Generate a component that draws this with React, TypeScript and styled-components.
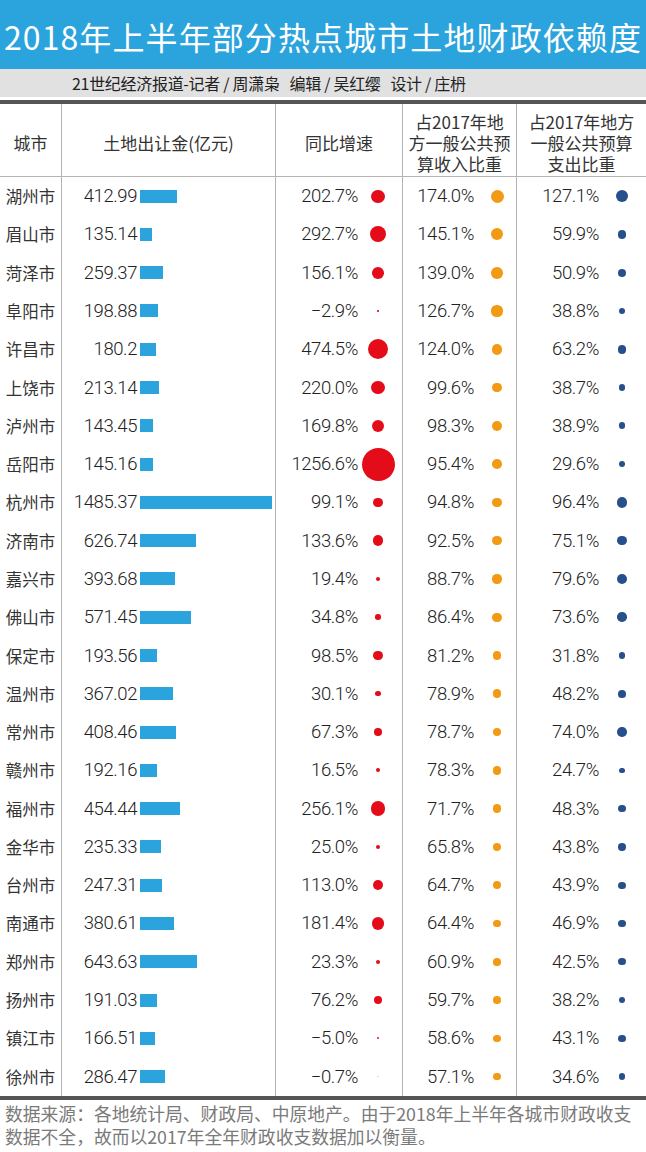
import styled, { createGlobalStyle } from 'styled-components'

export const GlobalStyle = createGlobalStyle`
  html, body {
    margin: 0;
    padding: 0;
    background: #ffffff;
  }
  body {
    font-family: 'Roboto', 'Noto Sans CJK SC', sans-serif;
    color: #222222;
  }
`

type Row = [string, number, number, number, number]

const rows: Row[] = [
  ['湖州市', 412.99, 202.7, 174.0, 127.1],
  ['眉山市', 135.14, 292.7, 145.1, 59.9],
  ['菏泽市', 259.37, 156.1, 139.0, 50.9],
  ['阜阳市', 198.88, -2.9, 126.7, 38.8],
  ['许昌市', 180.2, 474.5, 124.0, 63.2],
  ['上饶市', 213.14, 220.0, 99.6, 38.7],
  ['泸州市', 143.45, 169.8, 98.3, 38.9],
  ['岳阳市', 145.16, 1256.6, 95.4, 29.6],
  ['杭州市', 1485.37, 99.1, 94.8, 96.4],
  ['济南市', 626.74, 133.6, 92.5, 75.1],
  ['嘉兴市', 393.68, 19.4, 88.7, 79.6],
  ['佛山市', 571.45, 34.8, 86.4, 73.6],
  ['保定市', 193.56, 98.5, 81.2, 31.8],
  ['温州市', 367.02, 30.1, 78.9, 48.2],
  ['常州市', 408.46, 67.3, 78.7, 74.0],
  ['赣州市', 192.16, 16.5, 78.3, 24.7],
  ['福州市', 454.44, 256.1, 71.7, 48.3],
  ['金华市', 235.33, 25.0, 65.8, 43.8],
  ['台州市', 247.31, 113.0, 64.7, 43.9],
  ['南通市', 380.61, 181.4, 64.4, 46.9],
  ['郑州市', 643.63, 23.3, 60.9, 42.5],
  ['扬州市', 191.03, 76.2, 59.7, 38.2],
  ['镇江市', 166.51, -5.0, 58.6, 43.1],
  ['徐州市', 286.47, -0.7, 57.1, 34.6],
]

const BLUE = '#2ba3dd'

const Page = styled.div`
  width: 646px;
  display: flex;
  flex-direction: column;
`

const TitleBar = styled.div`
  height: 69px;
  background: ${BLUE};
  display: flex;
  align-items: center;
  justify-content: center;
  color: #ffffff;
  font-family: 'Noto Sans CJK SC', sans-serif;
  font-size: 32px;
  letter-spacing: 1.1px;
  padding-top: 2px;
  box-sizing: border-box;
`

const Byline = styled.div`
  height: 28px;
  background: #e1e1e1;
  display: flex;
  align-items: center;
  justify-content: flex-start;
  padding-left: 72px;
  font-family: 'Noto Sans CJK SC', sans-serif;
  font-size: 16px;
  letter-spacing: -0.3px;
  color: #222;
  white-space: pre;
`

const Table = styled.div`
  margin-top: 3px;
  border-top: 4px solid #555555;
  border-bottom: 4px solid #555555;
  display: grid;
  grid-template-columns: 62px 214px 127px 114px 129px;
`

const HeadCell = styled.div<{ $last?: boolean }>`
  height: 73px;
  border-bottom: 1px solid #b4b4b4;
  border-right: ${(p) => (p.$last ? 'none' : '1px solid #b4b4b4')};
  display: flex;
  align-items: center;
  justify-content: center;
  text-align: center;
  font-family: 'Noto Sans CJK SC', sans-serif;
  font-size: 17px;
  line-height: 21px;
  color: #333;
  box-sizing: border-box;
  padding-top: 4px;
`

const Cell = styled.div<{ $last?: boolean; $first?: boolean }>`
  height: 38.29px;
  border-right: ${(p) => (p.$last ? 'none' : '1px solid #b4b4b4')};
  display: flex;
  align-items: center;
  justify-content: ${(p) => (p.$first ? 'center' : 'flex-start')};
  box-sizing: border-box;
`

const CityName = styled.span`
  font-family: 'Noto Sans CJK SC', sans-serif;
  font-size: 16.5px;
  color: #333;
`

const Num = styled.span<{ $w: number }>`
  width: ${(p) => p.$w}px;
  text-align: right;
  flex: none;
  font-family: 'Roboto', 'Liberation Sans', sans-serif;
  font-weight: 300;
  font-size: 18.5px;
  color: #222;
  letter-spacing: -0.4px;
`

const Bar = styled.div`
  height: 13px;
  background: ${BLUE};
  margin-left: 3px;
`

const DotBox = styled.div`
  width: 36px;
  height: 36px;
  flex: none;
  display: flex;
  align-items: center;
  justify-content: center;
`

const Dot = styled.div<{ $c: string }>`
  border-radius: 50%;
  background: ${(p) => p.$c};
`

const Footer = styled.div`
  padding: 2px 4px 0 5px;
  font-family: 'Noto Sans CJK SC', sans-serif;
  font-size: 17.8px;
  line-height: 23px;
  color: #7a7a7a;
`

const fmt = (v: number) => (v < 0 ? '\u2212' + Math.abs(v).toFixed(1) : v.toFixed(1)) + '%'

function DotCell({ v, max, d, color, w, gap, last }: { v: number; max: number; d: number; color: string; w: number; gap: number; last?: boolean }) {
  const size = Math.max(d * Math.sqrt(Math.abs(v) / max), 1.2)
  return (
    <Cell $last={last}>
      <Num $w={w}>{fmt(v)}</Num>
      <DotBox style={{ marginLeft: gap }}>
        <Dot $c={color} style={{ width: size, height: size, opacity: Math.abs(v) < 2 ? 0.25 : 1 }} />
      </DotBox>
    </Cell>
  )
}

export function App() {
  return (
    <Page>
      <GlobalStyle />
      <TitleBar>2018年上半年部分热点城市土地财政依赖度</TitleBar>
      <Byline>{'21世纪经济报道-记者 / 周潇枭   编辑 / 吴红缨   设计 / 庄枬'}</Byline>
      <Table>
        <HeadCell>城市</HeadCell>
        <HeadCell>土地出让金(亿元)</HeadCell>
        <HeadCell>同比增速</HeadCell>
        <HeadCell>
          占2017年地
          <br />
          方一般公共预
          <br />
          算收入比重
        </HeadCell>
        <HeadCell $last>
          占2017年地方
          <br />
          一般公共预算
          <br />
          支出比重
        </HeadCell>
        {rows.map(([city, land, growth, rev, exp]) => [
          <Cell key={city + 'c'} $first>
            <CityName>{city}</CityName>
          </Cell>,
          <Cell key={city + 'l'}>
            <Num $w={75}>{land === 180.2 ? '180.2' : land.toFixed(2)}</Num>
            <Bar style={{ width: (land / 1485.37) * 132 }} />
          </Cell>,
          <DotCell key={city + 'g'} v={growth} max={1256.6} d={33} color="#e50c1a" w={82} gap={2} />,
          <DotCell key={city + 'r'} v={rev} max={174} d={13} color="#f39a14" w={71} gap={5} />,
          <DotCell key={city + 'e'} v={exp} max={127.1} d={12.5} color="#264f8c" w={82} gap={5} last />,
        ])}
      </Table>
      <Footer>
        数据来源：各地统计局、财政局、中原地产。由于2018年上半年各城市财政收支
        <br />
        数据不全，故而以2017年全年财政收支数据加以衡量。
      </Footer>
    </Page>
  )
}

export default App
